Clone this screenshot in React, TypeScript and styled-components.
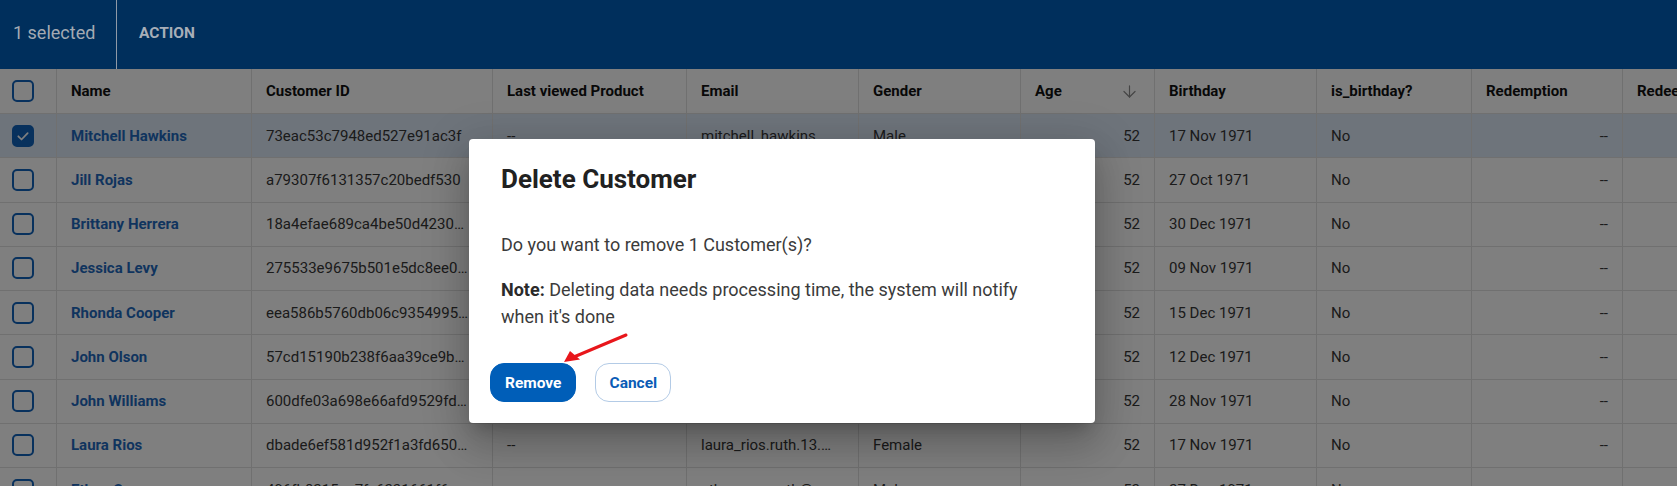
import React from 'react';
import styled, { createGlobalStyle } from 'styled-components';
import { ArrowDown } from 'lucide-react';

// helpers
const PRIMARY = '#005eb8';
const COLUMNS = '57px 195px 241px 194px 172px 162px 134px 162px 155px 151px 220px';

interface ICustomer {
  name: string;
  id: string;
  product: string;
  email: string;
  gender: string;
  age: number;
  birthday: string;
  isBirthday: string;
  redemption: string;
  selected?: boolean;
}

const customers: ICustomer[] = [
  { name: 'Mitchell Hawkins', id: '73eac53c7948ed527e91ac3f', product: '--', email: 'mitchell_hawkins.72@mail.com', gender: 'Male', age: 52, birthday: '17 Nov 1971', isBirthday: 'No', redemption: '--', selected: true },
  { name: 'Jill Rojas', id: 'a79307f6131357c20bedf530', product: '--', email: 'jill_rojas.88@mail.com', gender: 'Female', age: 52, birthday: '27 Oct 1971', isBirthday: 'No', redemption: '--' },
  { name: 'Brittany Herrera', id: '18a4efae689ca4be50d4230ee71b', product: '--', email: 'brittany.herrera@mail.com', gender: 'Female', age: 52, birthday: '30 Dec 1971', isBirthday: 'No', redemption: '--' },
  { name: 'Jessica Levy', id: '275533e9675b501e5dc8ee0a9c13', product: '--', email: 'jessica_levy.21@mail.com', gender: 'Female', age: 52, birthday: '09 Nov 1971', isBirthday: 'No', redemption: '--' },
  { name: 'Rhonda Cooper', id: 'eea586b5760db06c9354995d08e2', product: '--', email: 'rhonda.cooper@mail.com', gender: 'Female', age: 52, birthday: '15 Dec 1971', isBirthday: 'No', redemption: '--' },
  { name: 'John Olson', id: '57cd15190b238f6aa39ce9b7f4c0', product: '--', email: 'john_olson.45@mail.com', gender: 'Male', age: 52, birthday: '12 Dec 1971', isBirthday: 'No', redemption: '--' },
  { name: 'John Williams', id: '600dfe03a698e66afd9529fd31a7', product: '--', email: 'john.williams@mail.com', gender: 'Male', age: 52, birthday: '28 Nov 1971', isBirthday: 'No', redemption: '--' },
  { name: 'Laura Rios', id: 'dbade6ef581d952f1a3fd650b8e4', product: '--', email: 'laura_rios.ruth.13.mail.com', gender: 'Female', age: 52, birthday: '17 Nov 1971', isBirthday: 'No', redemption: '--' },
  { name: 'Ethan Cox', id: '496fb8215ac7fc6231661f6e02d9', product: '--', email: 'ethan_cox.ruth@mail.com', gender: 'Male', age: 52, birthday: '27 Dec 1971', isBirthday: 'No', redemption: '--' },
];

const CheckIcon = () => (
  <svg width='14' height='14' viewBox='0 0 24 24' fill='none' stroke='#fff' strokeWidth='3' strokeLinecap='round' strokeLinejoin='round'>
    <polyline points='4 12.5 9.5 18 20 7' />
  </svg>
);

const App = () => {
  return (
    <Page>
      <GlobalStyle />
      <SelectionBar>
        <SelectedCount>1 selected</SelectedCount>
        <ActionLabel>ACTION</ActionLabel>
      </SelectionBar>

      <Table>
        <HeaderRow>
          <Cell>
            <Checkbox />
          </Cell>
          <HeadCell>Name</HeadCell>
          <HeadCell>Customer ID</HeadCell>
          <HeadCell>Last viewed Product</HeadCell>
          <HeadCell>Email</HeadCell>
          <HeadCell>Gender</HeadCell>
          <HeadCell $spread>
            Age
            <SortIcon size={19} strokeWidth={1.5} />
          </HeadCell>
          <HeadCell>Birthday</HeadCell>
          <HeadCell>is_birthday?</HeadCell>
          <HeadCell>Redemption</HeadCell>
          <HeadCell>Redeemed Points</HeadCell>
        </HeaderRow>

        {customers.map((c) => (
          <BodyRow key={c.id} $selected={c.selected}>
            <Cell>
              <Checkbox $checked={c.selected}>{c.selected && <CheckIcon />}</Checkbox>
            </Cell>
            <Cell>
              <NameLink>{c.name}</NameLink>
            </Cell>
            <Cell>
              <Truncate>{c.id}</Truncate>
            </Cell>
            <Cell>{c.product}</Cell>
            <Cell>
              <Truncate>{c.email}</Truncate>
            </Cell>
            <Cell>{c.gender}</Cell>
            <Cell $right>{c.age}</Cell>
            <Cell>{c.birthday}</Cell>
            <Cell>{c.isBirthday}</Cell>
            <Cell $right>{c.redemption}</Cell>
            <Cell $right>--</Cell>
          </BodyRow>
        ))}
      </Table>

      <Backdrop>
        <Dialog>
          <DialogTitle>Delete Customer</DialogTitle>
          <DialogBody>
            <Paragraph>Do you want to remove 1 Customer(s)?</Paragraph>
            <Paragraph>
              <strong>Note:</strong> Deleting data needs processing time, the system will notify when it's done
            </Paragraph>
          </DialogBody>
          <DialogActions>
            <PrimaryButton>Remove</PrimaryButton>
            <OutlineButton>Cancel</OutlineButton>
          </DialogActions>
        </Dialog>

        <Annotation width='80' height='45' viewBox='0 0 80 45'>
          <path d='M71 10 L20 31.5' stroke='#e8161b' strokeWidth='3' strokeLinecap='round' />
          <polygon points='9,37 15,26 25,34.5' fill='#e8161b' />
        </Annotation>
      </Backdrop>
    </Page>
  );
};

const GlobalStyle = createGlobalStyle`
  html, body {
    margin: 0;
    padding: 0;
    height: 486px;
    overflow: hidden;
    background: #fff;
  }
  * {
    box-sizing: border-box;
  }
`;

const Page = styled.div`
  position: relative;
  width: 1677px;
  height: 486px;
  overflow: hidden;
  font-family: Roboto, 'Liberation Sans', sans-serif;
  color: #363636;
`;

const SelectionBar = styled.div`
  position: relative;
  z-index: 20;
  display: flex;
  align-items: stretch;
  height: 69px;
  background: #002f5c;
`;

const SelectedCount = styled.div`
  display: flex;
  align-items: center;
  width: 117px;
  padding: 0 0 4px 13px;
  border-right: 1px solid #8f99a6;
  font-size: 18px;
  color: #a3aab3;
`;

const ActionLabel = styled.div`
  display: flex;
  align-items: center;
  padding: 0 0 3px 22px;
  font-size: 15.5px;
  font-weight: 700;
  color: #a7aeb8;
`;

const Table = styled.div`
  display: flex;
  flex-direction: column;
  width: max-content;
`;

const HeaderRow = styled.div`
  display: grid;
  grid-template-columns: ${COLUMNS};
  height: 45px;
  border-bottom: 1px solid #e0e0e0;
`;

const BodyRow = styled.div<{ $selected?: boolean }>`
  display: grid;
  grid-template-columns: ${COLUMNS};
  height: 44.25px;
  flex-shrink: 0;
  border-bottom: 1px solid #e0e0e0;
  background: ${(p) => (p.$selected ? '#dde9f6' : '#fff')};
`;

const Cell = styled.div<{ $right?: boolean }>`
  display: flex;
  align-items: center;
  justify-content: ${(p) => (p.$right ? 'flex-end' : 'flex-start')};
  min-width: 0;
  padding: 0 14px;
  border-right: 1px solid #e0e0e0;
  font-size: 15px;
  white-space: nowrap;
  overflow: hidden;

  &:first-child {
    padding: 0 0 0 12px;
  }
`;

const HeadCell = styled(Cell)<{ $spread?: boolean }>`
  justify-content: ${(p) => (p.$spread ? 'space-between' : 'flex-start')};
  padding-right: ${(p) => (p.$spread ? '15px' : '14px')};
  font-weight: 700;
  color: #111;
`;

const SortIcon = styled(ArrowDown)`
  color: #8a8a8a;
`;

const Truncate = styled.span`
  display: block;
  padding-right: 8px;
  overflow: hidden;
  text-overflow: ellipsis;
  white-space: nowrap;
`;

const NameLink = styled.span`
  font-weight: 700;
  color: #1f69bd;
`;

const Checkbox = styled.span<{ $checked?: boolean }>`
  display: flex;
  align-items: center;
  justify-content: center;
  width: 22px;
  height: 22px;
  border: 2px solid #1062ba;
  border-radius: 5px;
  background: ${(p) => (p.$checked ? '#1062ba' : 'transparent')};
`;

const Backdrop = styled.div`
  position: absolute;
  inset: 0;
  z-index: 10;
  display: flex;
  align-items: flex-start;
  padding: 139px 0 0 469px;
  background: rgba(0, 0, 0, 0.5);
`;

const Dialog = styled.div`
  width: 626px;
  background: #fff;
  border-radius: 4px;
  box-shadow: 0 11px 15px -7px rgba(0, 0, 0, 0.2), 0 24px 38px 3px rgba(0, 0, 0, 0.14),
    0 9px 46px 8px rgba(0, 0, 0, 0.12);
`;

const DialogTitle = styled.h2`
  margin: 0;
  padding: 24px 32px 0;
  font-size: 26px;
  line-height: 32px;
  font-weight: 700;
  color: #212121;
`;

const DialogBody = styled.div`
  padding: 36px 32px 0;
  font-size: 18px;
  line-height: 27px;
  color: #3b3b3b;
`;

const Paragraph = styled.p`
  margin: 0 0 18px;

  &:last-child {
    margin-bottom: 0;
  }

  strong {
    font-weight: 700;
    color: #2a2a2a;
  }
`;

const DialogActions = styled.div`
  display: flex;
  gap: 19px;
  padding: 33px 21px 21px;
`;

const PrimaryButton = styled.button`
  height: 39px;
  padding: 0 14px;
  border: 1px solid ${PRIMARY};
  border-radius: 14px;
  background: ${PRIMARY};
  font-family: inherit;
  font-size: 15.5px;
  font-weight: 700;
  color: #fff;
  cursor: pointer;
`;

const OutlineButton = styled(PrimaryButton)`
  padding: 0 13px;
  border-color: #b3cbe6;
  background: #fff;
  color: #0a5cb6;
`;

const Annotation = styled.svg`
  position: absolute;
  left: 555px;
  top: 325px;
`;

export default App;
